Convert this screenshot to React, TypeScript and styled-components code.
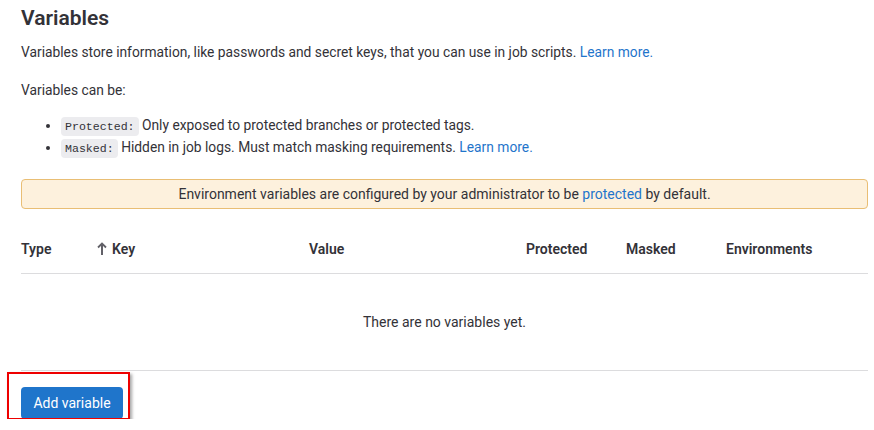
import React from "react";
import styled, { createGlobalStyle } from "styled-components";

const Global = createGlobalStyle`
  html, body { margin: 0; padding: 0; background: #fff; }
  body { font-family: Roboto, "Noto Sans", sans-serif; color: #333238; font-size: 14px; }
`;

const Page = styled.div`
  padding: 6px 6px 0 21px;
  width: 847px;
`;

const Title = styled.h2`
  margin: 0 0 12px;
  font-size: 21px;
  line-height: 24px;
  font-weight: 600;
  color: #333238;
`;

const Para = styled.p<{ $mb?: number }>`
  margin: 0 0 ${(p) => p.$mb ?? 0}px;
  font-size: 13.8px;
  line-height: 20px;
`;

const Link = styled.a`
  color: #1f75cb;
  text-decoration: none;
`;

const List = styled.ul`
  margin: 14px 0 21px;
  padding-left: 40px;
  li { line-height: 22px; height: 22px; font-size: 13.8px; }
`;

const Code = styled.code`
  font-family: "Liberation Mono", monospace;
  font-size: 11.6px;
  line-height: 1;
  background: #ececef;
  border-radius: 4px;
  padding: 3px 4px;
  color: #333238;
`;

const Alert = styled.div`
  border: 1px solid #e9be74;
  background: #fdf1dd;
  border-radius: 4px;
  height: 28px;
  display: flex;
  align-items: center;
  justify-content: center;
  font-size: 14px;
`;

const HeaderRow = styled.div`
  display: grid;
  grid-template-columns: 76px 212px 217px 100px 100px 1fr;
  margin-top: 30px;
  padding-bottom: 14px;
  border-bottom: 1px solid #dcdcde;
  font-weight: 600;
  line-height: 20px;
`;

const HeadCell = styled.div`
  display: flex;
  align-items: center;
  gap: 5px;
`;

const Empty = styled.div`
  height: 96px;
  display: flex;
  align-items: center;
  justify-content: center;
  border-bottom: 1px solid #dcdcde;
`;

const ButtonWrap = styled.div`
  position: relative;
  margin-top: 16px;
  display: inline-block;
  vertical-align: top;
`;

const Highlight = styled.div`
  position: absolute;
  left: -14px;
  top: -15px;
  width: 119px;
  height: 44px;
  border: 2px solid #ee0000;
  box-shadow: 2px 2px 3px rgba(0, 0, 0, 0.35);
  pointer-events: none;
`;

const Button = styled.button`
  font-family: inherit;
  display: block;
  height: 32px;
  width: 102px;
  border: none;
  border-radius: 4px;
  background: #1f75cb;
  color: #fff;
  font-size: 14px;
  padding: 0;
`;

const ArrowUp = () => (
  <svg width="10" height="14" viewBox="0 0 10 14" fill="none">
    <path d="M5 13V2" stroke="#626168" strokeWidth="2" />
    <path d="M1 5.5L5 1.5L9 5.5" stroke="#626168" strokeWidth="1.8" fill="none" />
  </svg>
);

export default function App() {
  return (
    <>
      <Global />
      <Page>
        <Title>Variables</Title>
        <Para $mb={18}>
          Variables store information, like passwords and secret keys, that you can use in job scripts.{" "}
          <Link href="#">Learn more.</Link>
        </Para>
        <Para>Variables can be:</Para>
        <List>
          <li>
            <Code>Protected:</Code> Only exposed to protected branches or protected tags.
          </li>
          <li>
            <Code>Masked:</Code> Hidden in job logs. Must match masking requirements.{" "}
            <Link href="#">Learn more.</Link>
          </li>
        </List>
        <Alert>
          <span>
            Environment variables are configured by your administrator to be{" "}
            <Link href="#">protected</Link> by default.
          </span>
        </Alert>
        <HeaderRow>
          <HeadCell>Type</HeadCell>
          <HeadCell>
            <ArrowUp />
            Key
          </HeadCell>
          <HeadCell>Value</HeadCell>
          <HeadCell>Protected</HeadCell>
          <HeadCell>Masked</HeadCell>
          <HeadCell>Environments</HeadCell>
        </HeaderRow>
        <Empty>There are no variables yet.</Empty>
        <ButtonWrap>
          <Button>Add variable</Button>
          <Highlight />
        </ButtonWrap>
      </Page>
    </>
  );
}
